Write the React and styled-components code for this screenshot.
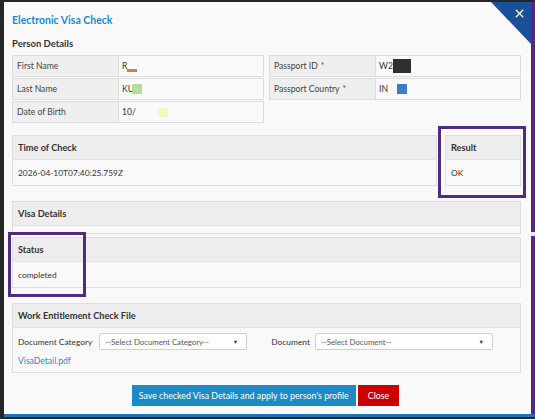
import React from 'react';
import styled, { createGlobalStyle } from 'styled-components';
import { X } from 'lucide-react';

const Global = createGlobalStyle`
  html, body {
    margin: 0;
    padding: 0;
    background: #262626;
    font-family: Lato, "Open Sans", sans-serif;
    color: #333;
  }
`;

const Shell = styled.div`
  padding: 2px 0 0 4px;
  height: 419px;
  box-sizing: border-box;
`;

const Frame = styled.div`
  display: flex;
  border-bottom: 3px solid #1a73c2;
`;

const Modal = styled.div`
  position: relative;
  width: 527px;
  height: 412px;
  box-sizing: border-box;
  background: #f9f9f9;
  padding: 11px 10px 0 8px;
`;

const Edge = styled.div`
  width: 4px;
  background: linear-gradient(#55297f 0 230px, #e6e6e6 230px 234px, #55297f 234px);
`;

const Corner = styled.div`
  position: absolute;
  top: 0;
  right: 0;
  width: 40px;
  height: 42px;
  background: #1c4f99;
  clip-path: polygon(0 0, 100% 0, 100% 100%);
  color: #fff;
  display: flex;
  justify-content: flex-end;
  padding: 5px 5px 0 0;
  box-sizing: border-box;
`;

const Title = styled.h1`
  margin: 0;
  font-size: 10.5px;
  line-height: 14px;
  font-weight: 700;
  color: #1b8ad0;
`;

const SectionLabel = styled.h2`
  margin: 10px 0 4px;
  font-size: 9.5px;
  line-height: 14px;
  font-weight: 700;
  color: #333;
`;

const Columns = styled.div`
  display: flex;
  gap: 5px;
  align-items: flex-start;
`;

const Table = styled.div`
  flex: 1;
  display: flex;
  flex-direction: column;
  gap: 1px;
`;

const Row = styled.div`
  display: flex;
  height: 22px;
  border: 1px solid #dcdcdc;
  box-sizing: border-box;
  font-size: 8.6px;
`;

const Label = styled.div`
  width: 106px;
  box-sizing: border-box;
  background: #efefef;
  border-right: 1px solid #dcdcdc;
  display: flex;
  align-items: center;
  padding-left: 4px;
  color: #444;
`;

const Value = styled.div`
  flex: 1;
  background: #fafafa;
  display: flex;
  align-items: center;
  padding-left: 3px;
  color: #333;
`;

const Req = styled.span`
  color: #d11;
  margin-left: 3px;
`;

const Blot = styled.span`
  display: inline-block;
  width: ${p => p.w}px;
  height: ${p => p.h}px;
  background: ${p => p.c};
  margin-left: ${p => p.ml || 0}px;
  align-self: ${p => (p.low ? 'flex-end' : 'center')};
  margin-bottom: ${p => (p.low ? 4 : 0)}px;
`;

const Panel = styled.div`
  position: relative;
  border: 1px solid #dedede;
  background: #f9f9f9;
  width: ${p => p.w || 'auto'};
  margin-top: ${p => p.mt || 0}px;
`;

const PanelHead = styled.div`
  height: 23px;
  background: #ededed;
  border-bottom: 1px solid #e2e2e2;
  display: flex;
  align-items: center;
  padding-left: 5px;
  font-size: 9.2px;
  font-weight: 700;
  color: #333;
`;

const PanelBody = styled.div`
  height: ${p => p.h}px;
  display: flex;
  align-items: center;
  padding-left: 5px;
  font-size: 8.4px;
  color: #333;
`;

const Highlight = styled.div`
  position: absolute;
  box-sizing: border-box;
  border: 3px solid #55297f;
  pointer-events: none;
`;

const TopRow = styled.div`
  display: flex;
  justify-content: space-between;
  margin-top: 12px;
  width: 509px;
`;

const WorkBody = styled.div`
  padding: 5px 6px 4px 5px;
  display: flex;
  flex-direction: column;
  gap: 4px;
`;

const FieldRow = styled.div`
  display: flex;
  align-items: center;
  font-size: 8.4px;
  color: #333;
`;

const Select = styled.div`
  width: ${p => p.w}px;
  height: 17px;
  box-sizing: border-box;
  border: 1px solid #cfcfcf;
  border-radius: 2px;
  background: #fff;
  margin-left: ${p => p.ml}px;
  margin-right: ${p => p.mr || 0}px;
  display: flex;
  align-items: center;
  justify-content: space-between;
  padding: 0 8px 0 5px;
  font-size: 7.8px;
  color: #555;
`;

const Caret = styled.span`
  font-size: 5.5px;
  color: #333;
`;

const Link = styled.a`
  font-size: 8.6px;
  line-height: 14px;
  color: #2a8ad4;
  text-decoration: none;
`;

const Actions = styled.div`
  display: flex;
  justify-content: center;
  gap: 2px;
  margin-top: 12px;
  padding-right: 2px;
`;

const Button = styled.button`
  height: 21px;
  border: none;
  padding: 0 ${p => p.px}px;
  font-family: inherit;
  font-size: 8.8px;
  color: #fff;
  background: ${p => p.bg};
`;

export default function App() {
  return (
    <Shell>
      <Global />
      <Frame>
        <Modal>
          <Corner><X size={13} strokeWidth={2.5} /></Corner>
          <Title>Electronic Visa Check</Title>
          <SectionLabel>Person Details</SectionLabel>
          <Columns>
            <Table>
              <Row>
                <Label>First Name</Label>
                <Value>R<Blot w={10} h={3} c="#c8833e" low /></Value>
              </Row>
              <Row>
                <Label>Last Name</Label>
                <Value>KU<Blot w={10} h={10} c="#b7dba0" ml={-2} /></Value>
              </Row>
              <Row>
                <Label>Date of Birth</Label>
                <Value>10/<Blot w={10} h={9} c="#f8f5c0" ml={22} /></Value>
              </Row>
            </Table>
            <Table>
              <Row>
                <Label>Passport ID<Req>*</Req></Label>
                <Value>W2<Blot w={18} h={14} c="#2f2f2f" /></Value>
              </Row>
              <Row>
                <Label>Passport Country<Req>*</Req></Label>
                <Value>IN<Blot w={10} h={10} c="#3b7dc6" ml={9} /></Value>
              </Row>
            </Table>
          </Columns>

          <TopRow>
            <Panel w="423px">
              <PanelHead>Time of Check</PanelHead>
              <PanelBody h={25}>2026-04-10T07:40:25.759Z</PanelBody>
            </Panel>
            <Panel w="74px">
              <Highlight style={{ left: -8, top: -10, width: 88, height: 72 }} />
              <PanelHead>Result</PanelHead>
              <PanelBody h={25}>OK</PanelBody>
            </Panel>
          </TopRow>

          <Panel mt={15}>
            <PanelHead>Visa Details</PanelHead>
            <PanelBody h={7} />
          </Panel>
          <Panel mt={3}>
            <Highlight style={{ left: -5, top: -6, width: 78, height: 65 }} />
            <PanelHead>Status</PanelHead>
            <PanelBody h={25}>completed</PanelBody>
          </Panel>

          <Panel mt={15}>
            <PanelHead>Work Entitlement Check File</PanelHead>
            <WorkBody>
              <FieldRow>
                Document Category
                <Select w={148} ml={7} mr={24}>--Select Document Category--<Caret>▼</Caret></Select>
                Document
                <Select w={178} ml={5}>--Select Document--<Caret>▼</Caret></Select>
              </FieldRow>
              <Link href="#">VisaDetail.pdf</Link>
            </WorkBody>
          </Panel>

          <Actions>
            <Button bg="#1b8bc4" px={7}>Save checked Visa Details and apply to person's profile</Button>
            <Button bg="#cc0000" px={10}>Close</Button>
          </Actions>
        </Modal>
        <Edge />
      </Frame>
    </Shell>
  );
}
